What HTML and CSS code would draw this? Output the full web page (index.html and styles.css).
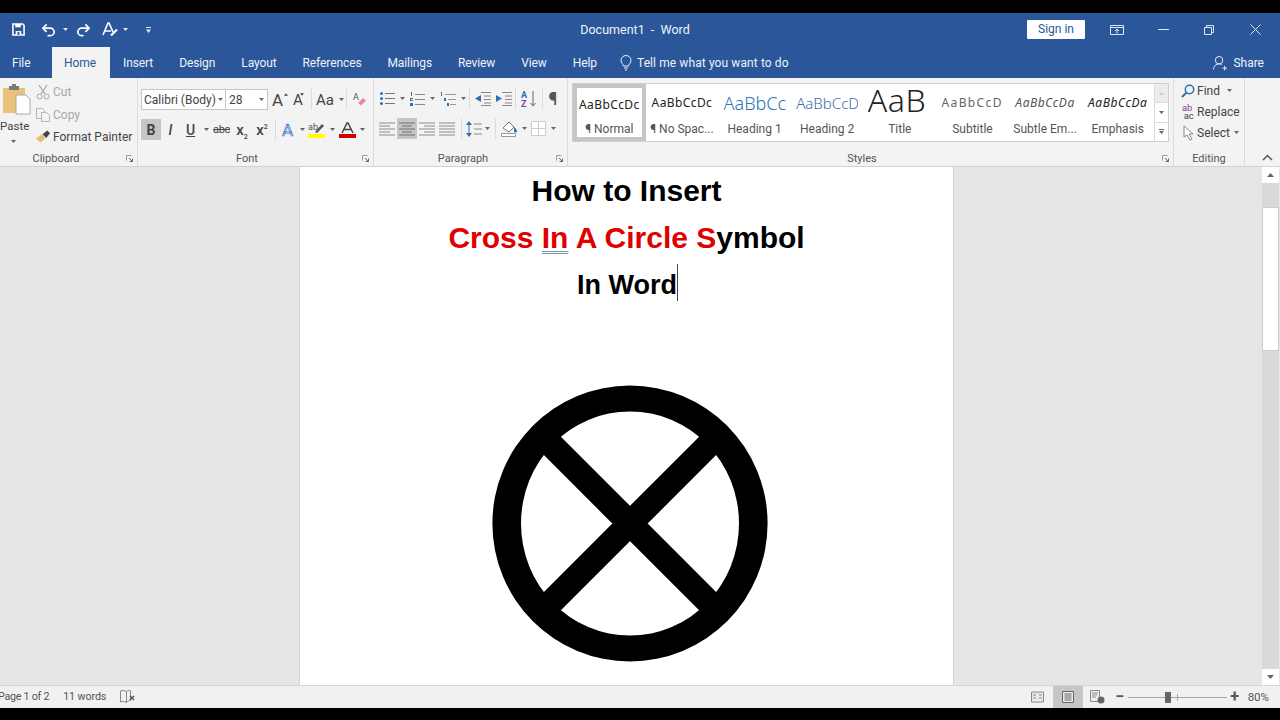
FILE: index.html
```html
<!DOCTYPE html>
<html lang="en">
<head>
<meta charset="utf-8">
<title>Document1 - Word</title>
<link rel="stylesheet" href="styles.css">
</head>
<body>
<svg class="defs" width="0" height="0" aria-hidden="true">
  <symbol id="caret" viewBox="0 0 5 3"><path d="M0 0h5L2.500 3z" fill="currentColor"/></symbol>
  <symbol id="launch" viewBox="0 0 7 7"><path d="M.5 5.500v-5h5" fill="none" stroke="#9a9a9a"/><path d="M3 3l3.500 3.500M6.500 3.500v3h-3" fill="none" stroke="#666"/></symbol>
  <symbol id="al-left" viewBox="0 0 16 14"><path d="M0 1h16M0 4h11M0 7h16M0 10h11M0 13h16" stroke="currentColor"/></symbol>
  <symbol id="al-center" viewBox="0 0 16 14"><path d="M0 1h16M3 4h10M0 7h16M3 10h10M0 13h16" stroke="currentColor"/></symbol>
  <symbol id="al-right" viewBox="0 0 16 14"><path d="M0 1h16M5 4h11M0 7h16M5 10h11M0 13h16" stroke="currentColor"/></symbol>
  <symbol id="al-just" viewBox="0 0 16 14"><path d="M0 1h16M0 4h16M0 7h16M0 10h16M0 13h16" stroke="currentColor"/></symbol>
</svg>

<div class="bar-black top"></div>

<header class="titlebar">
  <div class="qat">
    <svg class="qi first" width="13" height="13" viewBox="0 0 14 14"><path d="M1 1h10.500L13 2.500V13H1z" fill="none" stroke="#fff" stroke-width="1.700"/><path d="M3.500 1h6v3.500h-6zM4 8.500h6V13H4z" fill="#fff"/><path d="M6 9.500h2V13H6z" fill="#2b579a"/></svg>
    <svg class="qi undo" width="15" height="14" viewBox="0 0 16 14"><path d="M3 5h7a4 4 0 0 1 0 8H7M6 1L2 5l4 4" fill="none" stroke="#fff" stroke-width="1.800"/></svg>
    <svg class="car light" width="5" height="3"><use href="#caret"/></svg>
    <svg class="qi redo" width="15" height="14" viewBox="0 0 16 14"><path d="M13 5H6a4 4 0 0 0 0 8h2M10 1l4 4-4 4" fill="none" stroke="#fff" stroke-width="1.800"/></svg>
    <svg class="qi fmt" width="17" height="15" viewBox="0 0 17 15"><path d="M1 13L6 1h1l4 9M3 9h6" fill="none" stroke="#fff" stroke-width="1.600"/><path d="M8 13l6-6 2 1-6 6z" fill="#fff"/></svg>
    <svg class="car light tight" width="5" height="3"><use href="#caret"/></svg>
    <svg class="qi cust" width="5" height="6" viewBox="0 0 5 6"><path d="M0 0h5v1H0zM0 2.500h5L2.500 6z" fill="#dfe7f3"/></svg>
  </div>
  <div class="doc-title">Document1&nbsp; -&nbsp; Word</div>
  <div class="win">
    <button class="signin">Sign in</button>
    <span class="wc"><svg width="14" height="10" viewBox="0 0 14 10"><path d="M.5.500h13v9H.5zM.5 2.500h13" fill="none" stroke="#dfe7f3"/><path d="M7 8.500V4M5 6l2-2 2 2" fill="none" stroke="#dfe7f3"/></svg></span>
    <span class="wc"><svg width="11" height="1" viewBox="0 0 11 1"><path d="M0 .5h11" stroke="#dfe7f3"/></svg></span>
    <span class="wc"><svg width="10" height="10" viewBox="0 0 10 10"><path d="M.5 2.500h7v7h-7zM2.500 2.500v-2h7v7h-2" fill="none" stroke="#dfe7f3"/></svg></span>
    <span class="wc"><svg width="11" height="11" viewBox="0 0 11 11"><path d="M.5.500l10 10M10.500.500l-10 10" stroke="#dfe7f3"/></svg></span>
  </div>
</header>

<nav class="tabs">
  <span class="tab">File</span>
  <span class="tab active">Home</span>
  <span class="tab">Insert</span>
  <span class="tab">Design</span>
  <span class="tab">Layout</span>
  <span class="tab">References</span>
  <span class="tab">Mailings</span>
  <span class="tab">Review</span>
  <span class="tab">View</span>
  <span class="tab">Help</span>
  <span class="tell">
    <svg width="12" height="16" viewBox="0 0 12 16"><path d="M3.500 11C3 9 1 8 1 5.500a5 5 0 0 1 10 0C11 8 9 9 8.500 11zM4 13h4M5 15h2" fill="none" stroke="#eef2f8"/></svg>
    Tell me what you want to do
  </span>
  <span class="share">
    <svg width="14" height="16" viewBox="0 0 15 16"><circle cx="6.500" cy="5" r="4" fill="none" stroke="#eef2f8"/><path d="M.5 15c0-4 3-6 6-6 1 0 2 .2 3 1M10 13.500h5M12.500 11v5" fill="none" stroke="#eef2f8"/></svg>
    Share
  </span>
</nav>

<section class="ribbon">
  <div class="group g-clip">
    <div class="body clip">
      <div class="paste">
        <svg width="30" height="32" viewBox="0 0 30 32"><path d="M2 4h22v25H2z" fill="#e9c37c"/><path d="M8 2h3V0h4v2h3v4H8z" fill="#7b7b7b"/><path d="M15 11h10l4 4v15H15z" fill="#fff" stroke="#a9a9a9"/></svg>
        <span class="paste-l">Paste</span>
        <svg class="car" width="5" height="3"><use href="#caret"/></svg>
      </div>
      <div class="stack">
        <div class="st dis"><svg width="14" height="16" viewBox="0 0 14 16"><path d="M3 1l6 9M11 1L5 10" fill="none" stroke="#a8a8a8" stroke-width="1.300"/><circle cx="3.500" cy="12.500" r="2.500" fill="none" stroke="#a8a8a8"/><circle cx="10.500" cy="12.500" r="2.500" fill="none" stroke="#a8a8a8"/></svg>Cut</div>
        <div class="st dis"><svg width="14" height="15" viewBox="0 0 14 15"><path d="M.5 1.500h6l2 2v8H.5z" fill="#f3f3f3" stroke="#b5b5b5"/><path d="M5.500 5.500h5l3 3v6h-8z" fill="#f3f3f3" stroke="#b5b5b5"/></svg>Copy</div>
        <div class="st"><svg width="14" height="14" viewBox="0 0 15 14"><path d="M0 9l6-5 4 4-5 5z" fill="#e3bd74"/><path d="M7 4l5-4 3 3-4 5z" fill="#444"/></svg>Format Painter</div>
      </div>
    </div>
    <div class="label lb-clip">Clipboard</div>
    <svg class="launcher" width="7" height="7"><use href="#launch"/></svg>
  </div>

  <div class="group g-font">
    <div class="body rows">
      <div class="row">
        <div class="combo">
          <span class="c-name">Calibri (Body)<svg class="car" width="5" height="3"><use href="#caret"/></svg></span>
          <span class="c-size">28<svg class="car" width="5" height="3"><use href="#caret"/></svg></span>
        </div>
        <span class="t w20 big">A<svg class="up" width="4" height="3" viewBox="0 0 5 3"><path d="M0 3h5L2.500 0z" fill="currentColor"/></svg></span>
        <span class="t w16 mid">A<svg class="up" width="4" height="3"><use href="#caret"/></svg></span>
        <span class="t w10"><i class="sep"></i></span>
        <span class="t w28 mid">Aa<svg class="car tail" width="5" height="3"><use href="#caret"/></svg></span>
        <span class="t w4"><i class="sep"></i></span>
        <span class="t w18 eraser"><svg width="15" height="15" viewBox="0 0 15 15"><text class="tiny-a" x="1" y="8">A</text><path d="M6 11l5-5 3 2.500-5 5z" fill="#e88aa0"/></svg></span>
      </div>
      <div class="row r2">
        <span class="t w20 on bold">B</span>
        <span class="t w19 ital">I</span>
        <span class="t w21 und">U</span>
        <span class="t w10"><svg class="car" width="5" height="3"><use href="#caret"/></svg></span>
        <span class="t w21 strike">abc</span>
        <span class="t w20 scr"><span>x<sub>2</sub></span></span>
        <span class="t w20 scr"><span>x<sup>2</sup></span></span>
        <span class="t w6"><i class="sep"></i></span>
        <span class="t w19 effect">A</span>
        <span class="t w10"><svg class="car" width="5" height="3"><use href="#caret"/></svg></span>
        <span class="t w20"><svg width="18" height="16" viewBox="0 0 18 16"><text class="tiny-a" x="0" y="8">ab</text><path d="M7 10l7-8 2 2-7 7z" fill="#555"/><path d="M0 12h17v4H0z" fill="#ffff00"/></svg></span>
        <span class="t w10"><svg class="car" width="5" height="3"><use href="#caret"/></svg></span>
        <span class="t w20"><svg width="17" height="16" viewBox="0 0 17 16"><path d="M3 11L8 1h1l5 10M5 7.500h7" fill="none" stroke="#444" stroke-width="1.500"/><path d="M0 12h17v4H0z" fill="#d00000"/></svg></span>
        <span class="t w10"><svg class="car" width="5" height="3"><use href="#caret"/></svg></span>
      </div>
    </div>
    <div class="label lb-font">Font</div>
    <svg class="launcher" width="7" height="7"><use href="#launch"/></svg>
  </div>

  <div class="group g-para">
    <div class="body rows para">
      <div class="row">
        <span class="t w20"><svg width="15" height="13" viewBox="0 0 15 13"><path d="M5 1.500h10M5 6.500h10M5 11.500h10" stroke="#777"/><circle cx="1.500" cy="1.500" r="1.500" fill="#2f6fb5"/><circle cx="1.500" cy="6.500" r="1.500" fill="#2f6fb5"/><circle cx="1.500" cy="11.500" r="1.500" fill="#2f6fb5"/></svg></span>
        <span class="t w10"><svg class="car" width="5" height="3"><use href="#caret"/></svg></span>
        <span class="t w20"><svg width="15" height="14" viewBox="0 0 15 14"><path d="M5 2.500h10M5 7.500h10M5 12.500h10" stroke="#888"/><path d="M1 0h1v4H1zM0 6h3v1H1v1h2v1H0zM0 11h3v3H0z" fill="#2f6fb5"/></svg></span>
        <span class="t w10"><svg class="car" width="5" height="3"><use href="#caret"/></svg></span>
        <span class="t w22"><svg width="16" height="14" viewBox="0 0 16 14"><path d="M5 2.500h11M8 7.500h8M10 12.500h6" stroke="#999"/><path d="M1 0h1v4H1zM4 6h2v3H4zM7 11h2v3H7z" fill="#2f6fb5"/></svg></span>
        <span class="t w8"><svg class="car" width="5" height="3"><use href="#caret"/></svg></span>
        <span class="t w4"><i class="sep"></i></span>
        <span class="t w22"><svg width="17" height="14" viewBox="0 0 17 14"><path d="M7 .5h10M10 4h7M10 7.500h7M10 11h7M7 13.500h10" stroke="#888"/><path d="M7 3v7L1 6.500z" fill="#2f6fb5"/></svg></span>
        <span class="t w20"><svg width="17" height="14" viewBox="0 0 17 14"><path d="M7 .5h10M10 4h7M10 7.500h7M10 11h7M7 13.500h10" stroke="#888"/><path d="M1 3v7l6-3.500z" fill="#2f6fb5"/></svg></span>
        <span class="t w4"><i class="sep"></i></span>
        <span class="t w23"><svg width="16" height="17" viewBox="0 0 16 17"><text class="az1" x="0" y="8">A</text><text class="az2" x="0" y="17">Z</text><path d="M12 1v15M9.500 13l2.500 3 2.500-3" fill="none" stroke="#666"/></svg></span>
        <span class="t w4"><i class="sep"></i></span>
        <span class="t w18 pil">¶</span>
      </div>
      <div class="row r2">
        <span class="t w20"><svg class="li" width="16" height="14"><use href="#al-left"/></svg></span>
        <span class="t w20 on"><svg class="li" width="16" height="14"><use href="#al-center"/></svg></span>
        <span class="t w20"><svg class="li" width="16" height="14"><use href="#al-right"/></svg></span>
        <span class="t w20"><svg class="li" width="16" height="14"><use href="#al-just"/></svg></span>
        <span class="t w8"><i class="sep"></i></span>
        <span class="t w18"><svg width="16" height="16" viewBox="0 0 16 16"><path d="M3 1v14" stroke="#2f6fb5"/><path d="M0 4l3-4 3 4zM0 12l3 4 3-4z" fill="#2f6fb5"/><path d="M8 3h8M8 8h8M8 13h8" stroke="#888"/></svg></span>
        <span class="t w8"><svg class="car" width="5" height="3"><use href="#caret"/></svg></span>
        <span class="t w8"><i class="sep"></i></span>
        <span class="t w21"><svg width="17" height="17" viewBox="0 0 17 17"><path d="M2 8l6-6 5 5-5 5z" fill="#fff" stroke="#777"/><path d="M13 7c2 2 3 3 3 4a1.500 1.500 0 0 1-3 0z" fill="#2f6fb5"/><path d="M.5 13.500h14v3H.5z" fill="#fff" stroke="#999"/></svg></span>
        <span class="t w8"><svg class="car" width="5" height="3"><use href="#caret"/></svg></span>
        <span class="t w21"><svg width="15" height="15" viewBox="0 0 15 15"><path d="M.5.500h14v14H.5zM7.500.500v14M.5 7.500h14" fill="#fff" stroke="#ccc"/></svg></span>
        <span class="t w8"><svg class="car" width="5" height="3"><use href="#caret"/></svg></span>
      </div>
    </div>
    <div class="label lb-para">Paragraph</div>
    <svg class="launcher" width="7" height="7"><use href="#launch"/></svg>
  </div>

  <div class="group g-styles">
    <div class="body gallery-wrap">
      <div class="gallery">
        <div class="styles">
          <div class="style sel"><span class="sample s-normal">AaBbCcDc</span><span class="sname">¶ Normal</span></div>
          <div class="style"><span class="sample s-normal">AaBbCcDc</span><span class="sname">¶ No Spac...</span></div>
          <div class="style"><span class="sample s-h1">AaBbCc</span><span class="sname">Heading 1</span></div>
          <div class="style"><span class="sample s-h2">AaBbCcD</span><span class="sname">Heading 2</span></div>
          <div class="style"><span class="sample s-title">AaB</span><span class="sname">Title</span></div>
          <div class="style"><span class="sample s-sub">AaBbCcD</span><span class="sname">Subtitle</span></div>
          <div class="style"><span class="sample s-sem">AaBbCcDa</span><span class="sname">Subtle Em...</span></div>
          <div class="style"><span class="sample s-em">AaBbCcDa</span><span class="sname">Emphasis</span></div>
        </div>
        <div class="gscroll">
          <span class="gb dim"><svg width="5" height="3" viewBox="0 0 5 3"><path d="M0 3h5L2.500 0z" fill="#c8c8c8"/></svg></span>
          <span class="gb"><svg width="5" height="3"><use href="#caret"/></svg></span>
          <span class="gb"><svg width="5" height="5" viewBox="0 0 5 5"><path d="M0 0h5v1H0zM0 2h5L2.500 5z" fill="#666"/></svg></span>
        </div>
      </div>
    </div>
    <div class="label lb-styles">Styles</div>
    <svg class="launcher" width="7" height="7"><use href="#launch"/></svg>
  </div>

  <div class="group g-edit">
    <div class="body edit">
      <div class="ed"><svg width="14" height="14" viewBox="0 0 14 14"><circle cx="8.500" cy="5.500" r="4.200" fill="none" stroke="#2f6fb5" stroke-width="1.500"/><path d="M5.500 8.500L1 13" stroke="#2f6fb5" stroke-width="2"/></svg>Find<svg class="car ml" width="5" height="3"><use href="#caret"/></svg></div>
      <div class="ed"><svg width="14" height="15" viewBox="0 0 15 15"><text class="abtop" x="1" y="7">ab</text><text class="abbot" x="3" y="15">ac</text></svg>Replace</div>
      <div class="ed"><svg width="14" height="16" viewBox="0 0 14 16"><path d="M3 1v11l3-2 3 5 2-1-3-5h4z" fill="#fff" stroke="#888"/></svg>Select<svg class="car ml2" width="5" height="3"><use href="#caret"/></svg></div>
    </div>
    <div class="label">Editing</div>
  </div>

  <div class="collapse"><svg width="11" height="7" viewBox="0 0 11 7"><path d="M1 6l4.500-4.500L10 6" fill="none" stroke="#555" stroke-width="1.500"/></svg></div>
</section>

<main class="workspace">
  <article class="page">
    <p class="line">How to Insert</p>
    <p class="line"><span class="red">Cross <u class="squig">In</u> A Circle S</span>ymbol</p>
    <p class="line small">In Word<i class="cursor"></i></p>
    <svg class="xcircle" width="276" height="277" viewBox="0 0 276 277">
      <defs><clipPath id="ring"><ellipse cx="138" cy="138.500" rx="137" ry="138"/></clipPath></defs>
      <path d="M.4 138.500a137.600 138 0 1 0 275.200 0a137.600 138 0 1 0-275.200 0zM29 138.500a109 112 0 1 1 218 0a109 112 0 1 1-218 0z" fill-rule="evenodd" fill="#000"/>
      <path d="M40 40.500l196 196M236 40.500l-196 196" stroke="#000" stroke-width="25" clip-path="url(#ring)"/>
    </svg>
  </article>
  <aside class="vscroll">
    <span class="vb"><svg width="7" height="4" viewBox="0 0 7 4"><path d="M0 4h7L3.500 0z" fill="#666"/></svg></span>
    <span class="v-t1"></span>
    <span class="v-thumb"></span>
    <span class="v-t2"></span>
    <span class="vb"><svg width="7" height="4" viewBox="0 0 7 4"><path d="M0 0h7L3.500 4z" fill="#666"/></svg></span>
  </aside>
</main>

<footer class="status">
  <span class="s-page">Page 1 of 2</span>
  <span class="s-words">11 words</span>
  <svg class="s-book" width="15" height="13" viewBox="0 0 15 13"><path d="M.5 1c2-1 4-.500 6 .500v11c-2-1-4-1.500-6-.500zM6.500 1.500c1.500-1 2.500-1 4-1v10c-1.500 0-2.500.500-4 2" fill="#f1f1f1" stroke="#888"/><path d="M10 6l4 4M14 6l-4 4" stroke="#555" stroke-width="1.400"/></svg>
  <span class="s-right">
    <span class="vw"><svg width="13" height="12" viewBox="0 0 13 12"><path d="M.5 1h5.500l.5 1 .5-1h5.500v10H7l-.5 1-.5-1H.5z" fill="#e9e9e9" stroke="#8a8a8a"/><path d="M2 4h3M2 7h3M8 4h3M8 7h3" stroke="#8a8a8a"/></svg></span>
    <span class="vw cur"><svg width="12" height="12" viewBox="0 0 12 12"><path d="M.5.500h11v11H.5z" fill="#e9e9e9" stroke="#666"/><path d="M2.500 3h7M2.500 5h7M2.500 7h7M2.500 9h7" stroke="#666"/></svg></span>
    <span class="vw"><svg width="15" height="14" viewBox="0 0 15 14"><path d="M.5.500h9v11H.5z" fill="#eee" stroke="#8a8a8a"/><path d="M2 3h6M2 5h5M2 7h4" stroke="#8a8a8a"/><circle cx="11" cy="10" r="3.500" fill="#666"/></svg></span>
    <span class="zm-btn">−</span>
    <span class="slider"><i class="tick"></i><i class="knob"></i></span>
    <span class="zm-btn plus">+</span>
    <span class="zm-pct">80%</span>
  </span>
</footer>

<div class="bar-black bottom"></div>
</body>
</html>
```

FILE: styles.css
```css
* { box-sizing: border-box; }
html, body { margin: 0; padding: 0; }
body {
  width: 1280px; height: 720px; overflow: hidden;
  display: flex; flex-direction: column;
  font-family: Roboto, "Noto Sans", sans-serif;
  font-size: 12px; color: #444; background: #000;
}
svg { display: block; flex: none; overflow: visible; }
.defs { position: absolute; }
.bar-black { background: #000; flex: none; }
.top { height: 13px; }
.bottom { height: 12px; }

/* title bar */
.titlebar {
  height: 33px; flex: none; background: #2b579a; color: #fff;
  display: grid; grid-template-columns: 1fr auto 1fr; align-items: center;
}
.qat { display: flex; align-items: center; }
.car { color: #666; }
.car.light { color: #dfe7f3; margin-left: 7px; }
.car.light.tight { margin-left: 4px; }
.qi.first { margin-left: 12px; }
.qi.undo { margin-left: 16px; }
.qi.redo { margin-left: 8px; }
.qi.fmt { margin-left: 11px; }
.qi.cust { margin-left: 18px; }
.doc-title { font-size: 12.500px; padding-right: 10px; color: #eef2f8; white-space: nowrap; }
.win { display: flex; align-items: center; justify-content: flex-end; padding-right: 2px; }
.signin {
  width: 58px; height: 19px; margin-right: 9px; padding: 0 0 1px; border: 0; border-radius: 1px;
  background: #fff; color: #2b579a; font: 12px Roboto, sans-serif;
}
.wc { width: 46px; display: flex; justify-content: center; }

/* tabs */
.tabs { height: 32px; flex: none; background: #2b579a; color: #eef2f8; display: flex; align-items: stretch; }
.tab { padding: 1px 13px 0; display: flex; align-items: center; white-space: nowrap; letter-spacing: -.1px; }
.tab:first-child { padding: 1px 12px 0; width: 52px; }
.tab.active { background: #f3f3f3; color: #2b579a; margin: 1px 0 0; padding: 0 12px; width: 58px; }
.tell { margin-left: 10px; padding-top: 1px; display: flex; align-items: center; gap: 5px; white-space: nowrap; letter-spacing: .1px; }
.share { margin-left: auto; padding: 1px 16px 0 0; display: flex; align-items: center; gap: 6px; }

/* ribbon */
.ribbon { height: 89px; flex: none; background: #f3f3f3; border-bottom: 1px solid #d2d2d2; display: flex; position: relative; }
.group { position: relative; height: 88px; border-right: 1px solid #dcdcdc; display: flex; flex-direction: column; flex: none; }
.g-clip { width: 138px; }
.g-font { width: 236px; }
.g-para { width: 194px; }
.g-styles { width: 606px; }
.g-edit { width: 71px; }
.body { flex: 1; min-height: 0; }
.label { height: 16px; line-height: 17px; text-align: center; font-size: 11px; color: #555; }
.lb-clip { padding-right: 25px; }
.lb-font { padding-right: 17px; }
.lb-para { padding-right: 15px; }
.lb-styles { padding-right: 17px; }
.launcher { position: absolute; right: 4px; bottom: 4px; }
.collapse { flex: 1; display: flex; justify-content: flex-end; align-items: flex-end; padding: 0 7px 5px 0; }

/* clipboard */
.clip { display: flex; }
.paste { width: 35px; padding-top: 6px; display: flex; flex-direction: column; align-items: flex-start; }
.paste svg:first-child { margin-left: 1px; }
.paste-l { line-height: 17px; margin-top: 2px; font-size: 11.500px; }
.paste .car { margin: 5px 0 0 11px; }
.stack { padding: 3px 0 0 1px; }
.st { height: 22.500px; display: flex; align-items: center; gap: 3px; white-space: nowrap; }
.st.dis { color: #a9a9a9; }

/* rows */
.rows { padding: 11px 0 0 3px; }
.rows.para { padding-top: 10px; }
.row { display: flex; height: 21px; align-items: center; }
.r2 { margin-top: 9px; }
.t { display: flex; align-items: center; justify-content: center; height: 21px; flex: none; position: relative; }
.w4 { width: 4px; } .w6 { width: 6px; } .w8 { width: 8px; } .w10 { width: 10px; }
.w16 { width: 16px; } .w18 { width: 18px; } .w19 { width: 19px; } .w20 { width: 20px; }
.w21 { width: 21px; } .w22 { width: 22px; } .w23 { width: 23px; } .w28 { width: 28px; }
.on { background: #c6c6c6; }
.sep { display: block; width: 1px; height: 21px; background: #dcdcdc; }
.combo { width: 127px; height: 21px; margin-right: 2px; background: #fff; border: 1px solid #c6c6c6; display: flex; flex: none; }
.c-name { width: 84px; border-right: 1px solid #c6c6c6; display: flex; align-items: center; justify-content: space-between; padding: 0 2px 0 2px; white-space: nowrap; }
.c-size { flex: 1; display: flex; align-items: center; justify-content: space-between; padding: 0 3px 0 3px; }
.big { font-size: 17px; padding-right: 5px; }
.mid { font-size: 15px; }
.up { position: absolute; top: 4px; right: 2px; color: #444; }
.tail { margin-left: 5px; }
.eraser { margin-left: 2px; }
.bold { font-weight: 700; font-size: 14px; }
.ital { font: italic 500 14px Roboto, sans-serif; }
.und { font-size: 14px; font-weight: 500; text-decoration: underline; }
.strike { font-size: 11px; text-decoration: line-through; letter-spacing: -.3px; }
.scr { font-size: 15px; font-weight: 500; }
.scr sub, .scr sup { font-size: 7px; line-height: 0; }
.effect { font-size: 17px; color: #dceafa; -webkit-text-stroke: .7px #3b7fc4; }
.pil { font-size: 18px; font-weight: 500; color: #555; }
.li { color: #8a8a8a; }
.on .li { color: #6e6e6e; }
.tiny-a { font: 9px Roboto, sans-serif; fill: #555; }
.az1 { font: 700 9px Roboto, sans-serif; fill: #2f6fb5; }
.az2 { font: 700 9px Roboto, sans-serif; fill: #7a3e98; }

/* gallery */
.gallery-wrap { padding: 5px 0 0 4px; }
.gallery { width: 597px; height: 59px; background: #fff; border: 1px solid #cfcfcf; display: flex; }
.styles { width: 581px; display: grid; grid-template-columns: repeat(8, 1fr); }
.style { display: flex; flex-direction: column; align-items: center; overflow: hidden; border: 4px solid #fff; border-top-width: 1px; }
.style.sel { border: 4px solid #c6c6c6; }
.sample { height: 36px; line-height: 36px; white-space: nowrap; width: 62px; overflow: hidden; text-align: center; color: #222; font-family: "Noto Sans", sans-serif; }
.sel .sample { height: 33px; line-height: 33px; }
.sname { font-size: 12px; color: #555; line-height: 16px; white-space: nowrap; }
.s-normal { font-size: 12px; letter-spacing: .4px; }
.s-h1 { font-size: 18px; color: #2e74b5; font-weight: 300; text-align: left; }
.s-h2 { font-size: 15px; color: #3b6ea5; font-weight: 300; text-align: left; }
.s-title { font-size: 32px; font-weight: 300; line-height: 29px; width: 64px; letter-spacing: .5px; text-align: left; }
.s-sub { font-size: 12px; letter-spacing: 1.400px; color: #666; text-align: left; }
.s-sem { font-size: 12px; font-style: italic; color: #555; letter-spacing: .55px; }
.s-em { font-size: 12px; font-style: italic; color: #222; letter-spacing: .55px; }
.gscroll { flex: 1; display: flex; flex-direction: column; color: #666; border-left: 1px solid #dcdcdc; }
.gb { flex: 1; display: flex; align-items: center; justify-content: center; background: #fff; border-bottom: 1px solid #dcdcdc; }
.gb:last-child { border-bottom: 0; }
.gb.dim { background: #ececec; }

/* editing */
.edit { padding: 2px 0 0 7px; }
.ed { height: 21px; display: flex; align-items: center; gap: 2px; white-space: nowrap; }
.ml { margin-left: 5px; }
.ml2 { margin-left: 2px; }
.abtop { font: 10px Roboto, sans-serif; fill: #7a3e98; }
.abbot { font: 10px Roboto, sans-serif; fill: #444; }

/* document */
.workspace { flex: 1; min-height: 0; background: #e6e6e6; display: flex; overflow: hidden; padding-left: 299px; }
.page { width: 655px; flex: none; background: #fff; border-left: 1px solid #d4d4d4; border-right: 1px solid #d4d4d4; color: #000; font: 700 30px/47px "Liberation Sans", Arial, sans-serif; text-align: center; overflow: hidden; }
.line { margin: 0; white-space: nowrap; }
.line.small { font-size: 27px; padding: 1px 0 0 1px; }
.red { color: #e00000; }
.squig { text-decoration: underline double #7f96b0 1px; text-underline-offset: 3px; }
.cursor { display: inline-block; width: 1px; height: 37px; background: #444; vertical-align: -7px; margin-right: -1px; }
.xcircle { margin: 76px 0 0 192px; }
.vscroll { width: 17px; margin-left: auto; margin-right: 1px; display: flex; flex-direction: column; }
.vb { height: 16px; flex: none; background: #fff; display: flex; align-items: center; justify-content: center; }
.v-t1 { height: 24px; background: #d9d9d9; flex: none; }
.v-thumb { height: 144px; background: #fff; border: 1px solid #cdcdcd; flex: none; }
.v-t2 { flex: 1; background: #d9d9d9; }

/* status */
.status { height: 23px; flex: none; background: #f1f1f1; border-top: 1px solid #d6d6d6; display: flex; align-items: center; font-size: 10.700px; color: #555; }
.s-page { margin-left: -2px; padding-bottom: 2px; white-space: nowrap; letter-spacing: -.25px; }
.s-words { margin-left: 14px; padding-bottom: 2px; white-space: nowrap; letter-spacing: -.1px; }
.s-book { margin-left: 14px; margin-bottom: 2px; }
.s-right { margin-left: auto; display: flex; align-items: center; height: 100%; padding-right: 11px; }
.vw { width: 30px; height: 100%; display: flex; align-items: center; justify-content: center; }
.vw.cur { background: #c6c6c6; }
.zm-btn { width: 10px; font-size: 16px; font-weight: 700; line-height: 16px; text-align: center; color: #555; }
.vw:nth-child(3) { margin-right: 2px; }
.slider { width: 99px; height: 1px; background: #a6a6a6; margin: 0 3px 0 3px; position: relative; }
.knob { position: absolute; left: 37px; top: -5px; width: 6px; height: 11px; background: #666; }
.tick { position: absolute; left: 49px; top: -3px; width: 1px; height: 7px; background: #a6a6a6; }
.zm-pct { margin-left: 8px; font-size: 11.500px; }
```
